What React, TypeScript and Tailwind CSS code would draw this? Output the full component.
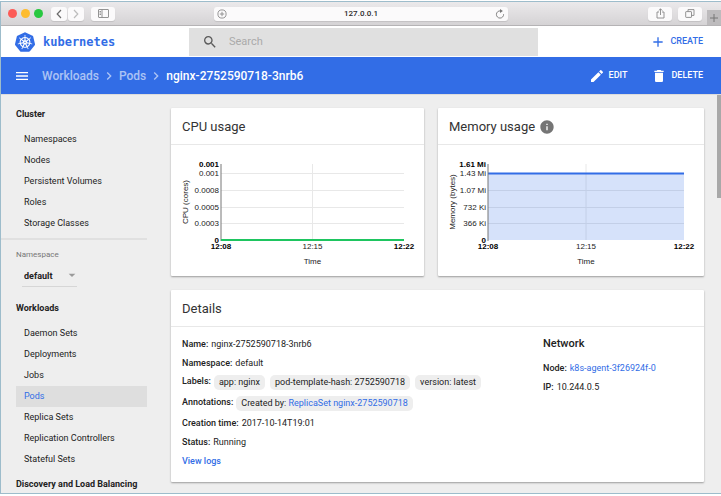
import React from "react";
import {
  MdAdd,
  MdArrowDropDown,
  MdChevronRight,
  MdDelete,
  MdEdit,
  MdInfo,
  MdMenu,
  MdSearch,
} from "react-icons/md";
import { SiKubernetes } from "react-icons/si";

const clusterItems = ["Namespaces", "Nodes", "Persistent Volumes", "Roles", "Storage Classes"];
const workloadItems = [
  "Daemon Sets",
  "Deployments",
  "Jobs",
  "Pods",
  "Replica Sets",
  "Replication Controllers",
  "Stateful Sets",
];

const chromeButton =
  "flex h-[14px] items-center justify-center rounded-[3px] bg-[#fbfafb] text-[#6b6b6b] shadow-[0_1px_1px_rgba(0,0,0,0.1)]";

function BrowserBar() {
  return (
    <div className="relative grid h-6 grid-cols-[213fr_294fr_213fr] items-center border-b border-[#b5b3b5] bg-linear-to-b from-[#ebe9eb] to-[#d5d3d5]">
      <div className="flex items-center pl-[7px]">
        <div className="flex gap-1">
          <span className="size-[9px] rounded-full bg-[#fc5b57]" />
          <span className="size-[9px] rounded-full bg-[#fdbc2e]" />
          <span className="size-[9px] rounded-full bg-[#28c840]" />
        </div>
        <button aria-label="Back" className={`${chromeButton} ml-2 w-4`}>
          <svg width="6" height="10" viewBox="0 0 6 10" fill="none" stroke="currentColor" strokeWidth="1.2">
            <path d="M5 1 1.200 5 5 9" />
          </svg>
        </button>
        <button aria-label="Forward" className={`${chromeButton} ml-px w-4`}>
          <svg width="6" height="10" viewBox="0 0 6 10" fill="none" stroke="#bdbdbd" strokeWidth="1.2">
            <path d="M1 1 4.800 5 1 9" />
          </svg>
        </button>
        <button aria-label="Show sidebar" className={`${chromeButton} ml-[7px] w-6`}>
          <svg width="11" height="9" viewBox="0 0 11 9" fill="none" stroke="#888" strokeWidth="0.9">
            <rect x="0.5" y="0.5" width="10" height="8" rx="0.5" />
            <path d="M4 .5v8M1.500 2.500h1.500M1.500 4h1.500M1.500 5.500h1.500" />
          </svg>
        </button>
      </div>
      <div className="flex h-[14px] items-center rounded-[3px] bg-[#fbfafb] px-[3px] shadow-[0_1px_1px_rgba(0,0,0,0.1)]">
        <svg width="10" height="10" viewBox="0 0 10 10" fill="none" stroke="#8a8a8a" strokeWidth="0.9">
          <circle cx="5" cy="5" r="4.1" />
          <path d="M5 2.800v4.400M2.800 5h4.400" />
        </svg>
        <input
          aria-label="Address"
          defaultValue="127.0.0.1"
          className="min-w-0 flex-1 bg-transparent text-center font-[Roboto,sans-serif] text-[8px] font-medium text-[#2b2b2b] outline-none"
        />
        <button aria-label="Reload">
          <svg width="10" height="10" viewBox="0 0 10 10" fill="none" stroke="#777" strokeWidth="0.9">
            <path d="M8.600 5.200A3.600 3.600 0 1 1 5.400 1.900" />
            <path d="M5 .1 7.900 2 5 3.900Z" fill="#777" stroke="none" />
          </svg>
        </button>
      </div>
      <div className="flex items-center justify-end gap-[6px] pr-[19px]">
        <button aria-label="Share" className={`${chromeButton} w-6`}>
          <svg width="9" height="11" viewBox="0 0 9 11" fill="none" stroke="#888" strokeWidth="0.9">
            <path d="M3 4H1v6h7V4H6M4.500 7V1M2.700 2.600 4.500.8l1.800 1.800" />
          </svg>
        </button>
        <button aria-label="Show tabs" className={`${chromeButton} w-6`}>
          <svg width="10" height="9" viewBox="0 0 10 9" fill="none" stroke="#888" strokeWidth="0.9">
            <rect x="0.7" y="2.6" width="5.8" height="5.8" rx="0.5" />
            <path d="M3 2.600V.6h6v5.800H6.500" />
          </svg>
        </button>
      </div>
      <button
        aria-label="New tab"
        className="absolute right-0 bottom-0 flex h-[15px] w-[14px] items-center justify-center bg-[#bdbbbd]"
      >
        <svg width="8" height="8" viewBox="0 0 8 8" stroke="#777" strokeWidth="1">
          <path d="M4 0v8M0 4h8" />
        </svg>
      </button>
    </div>
  );
}

function NavGroup({ title, items, active }: { title: string; items: string[]; active?: string }) {
  return (
    <section>
      <h2 className="pl-[15px] text-[9px] leading-[18px] font-bold">{title}</h2>
      {items.length > 0 && (
        <ul className="mt-[6px] pl-[15px]">
          {items.map((item) => (
            <li key={item}>
              <a
                href="#"
                className={
                  item === active
                    ? "block bg-[#dedede] pl-2 text-[9px] leading-[21px] text-[#326de6]"
                    : "block pl-2 text-[9px] leading-[21px]"
                }
              >
                {item}
              </a>
            </li>
          ))}
        </ul>
      )}
    </section>
  );
}

function Sidebar() {
  return (
    <nav className="w-[146px] shrink-0 pt-[10px]">
      <NavGroup title="Cluster" items={clusterItems} />
      <hr className="mt-[4px] border-t-2 border-[#e0e0e0]" />
      <div className="mt-2 pl-[15px]">
        <label htmlFor="namespace" className="block text-[8px] leading-[14px] text-[#777]">
          Namespace
        </label>
        <div className="relative mt-1 ml-[6px] w-[55px] border-b border-[#d6d6d6]">
          <select
            id="namespace"
            className="block h-5 w-full appearance-none bg-transparent pt-[2px] pl-[2px] text-[9px] font-bold outline-none"
          >
            <option>default</option>
          </select>
          <MdArrowDropDown className="pointer-events-none absolute top-px -right-[3px] size-4 text-[#9a9a9a]" />
        </div>
      </div>
      <div className="mt-[12px]">
        <NavGroup title="Workloads" items={workloadItems} active="Pods" />
      </div>
      <div className="mt-[5px]">
        <NavGroup title="Discovery and Load Balancing" items={[]} />
      </div>
    </nav>
  );
}

type ChartProps = {
  name: string;
  width: number;
  left: number;
  right: number;
  yTitle: string;
  top: string;
  ticks: string[];
  line: "bottom" | "top";
};

const tickY = [28, 45, 62, 78];

function Chart({ name, width, left, right, yTitle, top, ticks, line }: ChartProps) {
  const mid = (left + right) / 2;
  return (
    <svg
      viewBox={`0 0 ${width} 131`}
      className="block w-full font-['Liberation_Sans',Arial,sans-serif] text-[8px]"
      role="img"
      aria-label={name}
    >
      <g stroke="#e8e8e8" strokeWidth="1">
        {tickY.map((y) => (
          <path key={y} d={`M${left} ${y + 0.5}H${right}`} />
        ))}
        <path d={`M${mid} 19V95`} />
      </g>
      {line === "top" && (
        <>
          <rect x={left} y="28" width={right - left} height="67" fill="#326de6" fillOpacity="0.2" />
          <path d={`M${left} 28.500H${right}`} stroke="#326de6" strokeWidth="2" />
        </>
      )}
      <path d={`M${left} 19V96`} stroke="#777" strokeWidth="1" />
      {line === "bottom" && <path d={`M${left} 95H${right}`} stroke="#1ec560" strokeWidth="2" />}
      <g textAnchor="end" fill="#222">
        <text x={left - 2} y="22" fontWeight="700" fill="#000">
          {top}
        </text>
        {ticks.map((t, i) => (
          <text key={t} x={left - 2} y={tickY[i] + 3}>
            {t}
          </text>
        ))}
        <text x={left - 2} y="98" fontWeight="700" fill="#000">
          0
        </text>
      </g>
      <g textAnchor="middle" fill="#000">
        <text x={left} y="104" fontWeight="700">
          12:08
        </text>
        <text x={mid} y="104" fill="#222">
          12:15
        </text>
        <text x={right} y="104" fontWeight="700">
          12:22
        </text>
        <text x={mid} y="119" fill="#222">
          Time
        </text>
        <text transform="translate(17 57) rotate(-90)" fill="#222">
          {yTitle}
        </text>
      </g>
    </svg>
  );
}

function Card({ title, icon, children }: { title: string; icon?: React.ReactNode; children: React.ReactNode }) {
  return (
    <section className="rounded-[1px] bg-white shadow-[0_1px_2px_rgba(0,0,0,0.35)]">
      <h2 className="flex h-[37px] items-center gap-1 border-b border-[#e8e8e8] px-[11px] pt-[2px] text-[13px] text-[#333]">
        {title}
        {icon}
      </h2>
      {children}
    </section>
  );
}

function Chip({ children }: { children: React.ReactNode }) {
  return <span className="h-[15px] rounded-[5px] bg-[#eee] px-[5px] leading-[15px]">{children}</span>;
}

function Details() {
  return (
    <div className="grid grid-cols-[361fr_150fr] px-[11px] pt-2 pb-3 text-[9px] leading-[18px]">
      <dl className="flex flex-col gap-px">
        <div className="flex gap-[3px]">
          <dt className="font-medium">Name:</dt>
          <dd>nginx-2752590718-3nrb6</dd>
        </div>
        <div className="flex gap-[3px]">
          <dt className="font-medium">Namespace:</dt>
          <dd>default</dd>
        </div>
        <div className="flex h-5 gap-[3px] pt-[2px]">
          <dt className="leading-[13px] font-medium">Labels:</dt>
          <dd className="flex gap-[5px]">
            <Chip>app: nginx</Chip>
            <Chip>pod-template-hash: 2752590718</Chip>
            <Chip>version: latest</Chip>
          </dd>
        </div>
        <div className="flex h-[19px] gap-[3px] pt-[2px]">
          <dt className="leading-[13px] font-medium">Annotations:</dt>
          <dd className="flex">
            <Chip>
              Created by:{" "}
              <a href="#" className="text-[#326de6]">
                ReplicaSet nginx-2752590718
              </a>
            </Chip>
          </dd>
        </div>
        <div className="flex gap-[3px]">
          <dt className="font-medium">Creation time:</dt>
          <dd>2017-10-14T19:01</dd>
        </div>
        <div className="flex gap-[3px]">
          <dt className="font-medium">Status:</dt>
          <dd>Running</dd>
        </div>
        <div>
          <a href="#" className="block font-medium text-[#326de6]">
            View logs
          </a>
        </div>
      </dl>
      <div>
        <h3 className="mb-[6px] text-[11px] leading-[18px] font-medium">Network</h3>
        <dl className="flex flex-col gap-px">
          <div className="flex gap-[3px]">
            <dt className="font-medium">Node:</dt>
            <dd>
              <a href="#" className="text-[#326de6]">
                k8s-agent-3f26924f-0
              </a>
            </dd>
          </div>
          <div className="flex gap-[3px]">
            <dt className="font-medium">IP:</dt>
            <dd>10.244.0.5</dd>
          </div>
        </dl>
      </div>
    </div>
  );
}

export default function App() {
  return (
    <div className="pt-px font-[Roboto,sans-serif] text-[#222]">
      <div className="border-y border-l border-[#9dbccb] bg-[#eee]">
        <BrowserBar />
        <header className="grid h-[31px] grid-cols-[188px_349fr_183fr] items-center bg-white">
          <a
            href="#"
            className="flex items-center gap-2 pl-[14px] font-['DejaVu_Sans_Mono',monospace] text-[12px] font-bold text-[#326de6]"
          >
            <SiKubernetes className="size-5" />
            kubernetes
          </a>
          <div className="flex h-7 items-center bg-[#e0e0e0] pl-[13px]">
            <MdSearch className="size-4 text-[#5a5a5a]" />
            <input
              type="search"
              aria-label="Search"
              placeholder="Search"
              className="ml-[11px] min-w-0 flex-1 bg-transparent pt-[2px] text-[11px] outline-none placeholder:text-[#aaa]"
            />
          </div>
          <button className="flex items-center justify-self-end gap-1 pt-px pr-[18px] text-[9px] font-medium text-[#326de6]">
            <MdAdd className="size-4" />
            CREATE
          </button>
        </header>
        <div className="flex h-[37px] items-center bg-[#326de6] pt-px pr-[18px] pl-[13px] text-white">
          <button aria-label="Toggle navigation">
            <MdMenu className="size-4" />
          </button>
          <nav aria-label="Breadcrumb" className="ml-3 flex items-center gap-[2px] text-[12px] text-white/60">
            <a href="#" className="font-medium">
              Workloads
            </a>
            <MdChevronRight className="size-4" />
            <a href="#" className="font-medium">
              Pods
            </a>
            <MdChevronRight className="size-4" />
            <span className="font-medium text-white">nginx-2752590718-3nrb6</span>
          </nav>
          <div className="ml-auto flex items-center gap-6 text-[9px] font-medium">
            <button className="flex items-center gap-1">
              <MdEdit className="size-4" />
              EDIT
            </button>
            <button className="flex items-center gap-1">
              <MdDelete className="size-4" />
              DELETE
            </button>
          </div>
        </div>
        <div className="relative flex border-t border-[#dcdcdc]">
          <Sidebar />
          <main className="min-w-0 flex-1 pt-[13px] pr-[17px] pb-[10px] pl-6">
            <div className="grid grid-cols-[253fr_266fr] gap-[14px]">
              <Card title="CPU usage">
                <Chart
                  name="CPU usage over time"
                  width={253}
                  left={50}
                  right={233}
                  yTitle="CPU (cores)"
                  top="0.001"
                  ticks={["0.001", "0.0008", "0.0005", "0.0003"]}
                  line="bottom"
                />
              </Card>
              <Card title="Memory usage" icon={<MdInfo className="size-4 text-[#757575]" />}>
                <Chart
                  name="Memory usage over time"
                  width={266}
                  left={50}
                  right={246}
                  yTitle="Memory (bytes)"
                  top="1.61 Mi"
                  ticks={["1.43 Mi", "1.07 Mi", "732 Ki", "366 Ki"]}
                  line="top"
                />
              </Card>
            </div>
            <div className="mt-[14px]">
              <Card title="Details">
                <Details />
              </Card>
            </div>
          </main>
          <div className="absolute top-0 right-0 h-[103px] w-1 bg-[#a8a8a8]" />
        </div>
      </div>
    </div>
  );
}
